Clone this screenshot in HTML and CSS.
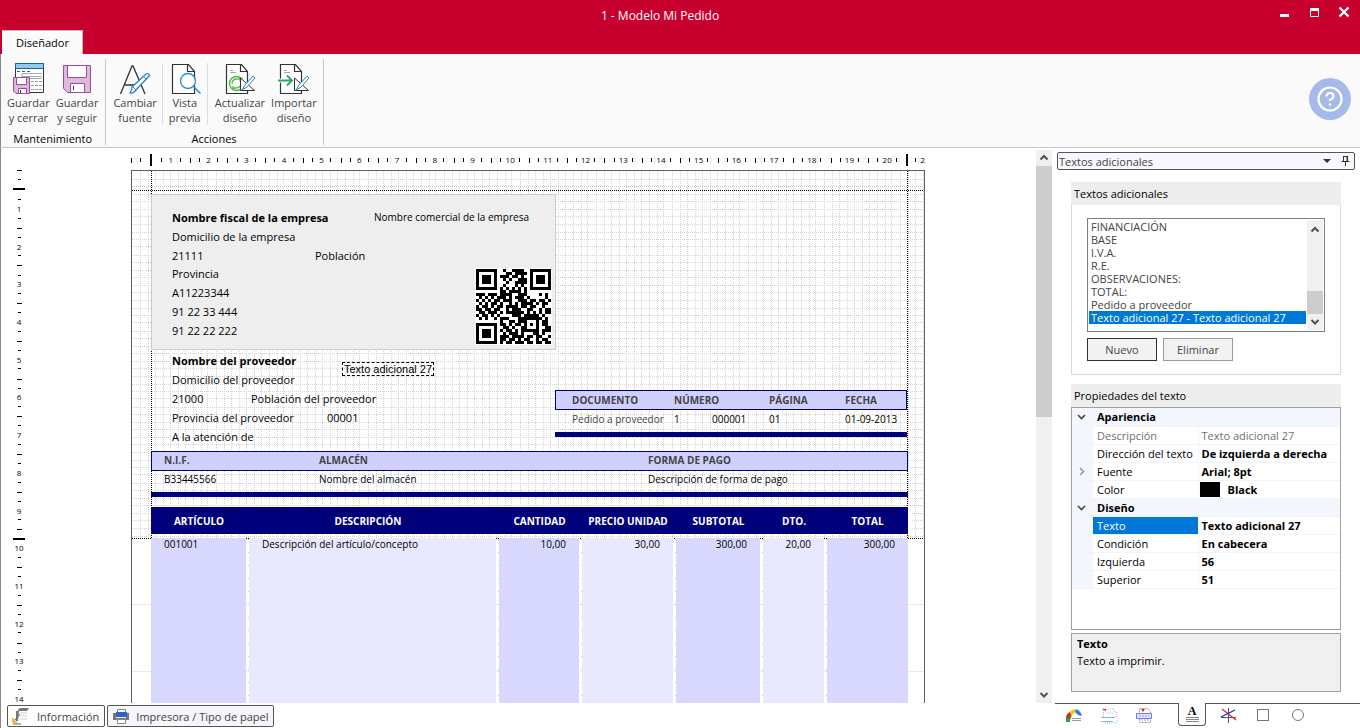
FILE: index.html
```html
<!DOCTYPE html>
<html lang="es">
<head>
<meta charset="utf-8">
<title>1 - Modelo Mi Pedido</title>
<link rel="stylesheet" href="styles.css">
</head>
<body>
<header class="titlebar">
  <div class="caption">
    <span></span>
    <h1>1 - Modelo Mi Pedido</h1>
    <div class="win-buttons">
      <button aria-label="Minimizar"><svg width="12" height="12"><path d="M2 9.500h9" stroke="#fff" stroke-width="3"/></svg></button>
      <button aria-label="Maximizar"><svg width="12" height="12"><path d="M2.500 2v8.500h8V2" stroke="#fff" fill="none"/><path d="M2 3.500h9" stroke="#fff" stroke-width="3"/></svg></button>
      <button aria-label="Cerrar"><svg width="12" height="12"><path d="M1.500 1.500l9 9M10.500 1.500l-9 9" stroke="#fff" stroke-width="2.400"/></svg></button>
    </div>
  </div>
  <button class="ribbon-tab">Diseñador</button>
</header>
<nav class="ribbon">
  <section class="group">
    <div class="tools">
      <button class="tool"><svg width="32" height="32"><path d="M3.500 5v24.500h28V5" fill="#fff" stroke="#333"/><rect x="3.500" y=".5" width="28" height="5" fill="#91c9f2" stroke="#1565a8"/><path d="M5 8.500h3m2 0h3m2 0h3" stroke="#555"/><path d="M10 10.500h20m-20 3h20m-20 2h20M10 10v8" stroke="#aaa"/><path d="M19 18.500h3m1 0h3m1 0h3m-11 4h3m1 0h3m1 0h3m-11 4h3m1 0h3m1 0h3" stroke="#999"/><path d="M1.500 14.500h16v16H4l-2.500-2.500z" fill="#dfb9dc" stroke="#9c4a9a"/><path d="M4.500 14.500h10v7h-10zM6.500 30.500v-5h8v5z" fill="#fff" stroke="#9c4a9a"/><path d="M8.500 27v3" stroke="#333"/></svg><span>Guardar<br>y cerrar</span></button>
      <button class="tool"><svg width="32" height="32"><path d="M2.500 2.500h27v27H6.500l-4-4z" fill="#dfb9dc" stroke="#9c4a9a"/><path d="M6.500 2.500h19v12h-19zM9.500 29.500v-9h14v9z" fill="#fff" stroke="#9c4a9a"/><path d="M12.500 23v4" stroke="#333"/></svg><span>Guardar<br>y seguir</span></button>
    </div>
    <h2>Mantenimiento</h2>
  </section>
  <section class="group actions">
    <div class="tools">
      <button class="tool split"><svg width="32" height="32"><path d="M1.500 31L13 3h1l12 28M6 22h15" fill="none" stroke="#333" stroke-width="1.300"/><path d="M13 24L27 11q3-1 3.500 1.500L17 27q-3 4-6 3 2-3 2-6z" fill="#fff" stroke="#2582c5" stroke-width="1.300"/><path d="M13 23l4 4M24 13l4 4" stroke="#2582c5"/></svg><span>Cambiar<br>fuente</span></button>
      <button class="tool split"><svg width="32" height="32"><path d="M3.500 1.500h16l6 7v22h-22zM18.500 1.500v7h7" fill="#fff" stroke="#333" stroke-width="1.200"/><circle cx="19" cy="18" r="7.500" fill="#fff" stroke="#2b8ad0" stroke-width="1.300"/><path d="M24.500 23.500l7 7" stroke="#2b8ad0" stroke-width="1.500"/></svg><span>Vista<br>previa</span></button>
      <button class="tool"><svg width="32" height="32"><path d="M2.500 1.500h15l6 7v22h-21zM16.500 1.500v7h7" fill="#fff" stroke="#333" stroke-width="1.200"/><path d="M6 7.500h3m-3 2h6" stroke="#aaa"/><circle cx="12.500" cy="20.500" r="7" fill="none" stroke="#54b948" stroke-width="1.500"/><path d="M8 21q0-5 5-5h3m0-2v4m1 2q0 5-5 5H9m0-2v4" fill="none" stroke="#54b948" stroke-width="1.300"/><path d="M16.500 15v12.500h14z" fill="#fff" stroke="#333"/><path d="M21 22l8-9 2 2-8 9-5 3z" fill="#fff" stroke="#2582c5"/></svg><span>Actualizar<br>diseño</span></button>
      <button class="tool"><svg width="32" height="32"><path d="M2.500 1.500h15l6 7v22h-21zM16.500 1.500v7h7" fill="#fff" stroke="#333" stroke-width="1.200"/><path d="M6 7.500h3m-3 2h6" stroke="#aaa"/><path d="M0 17.500h13M9 13l5 4.500L9 22" fill="none" stroke="#fff" stroke-width="4"/><path d="M0 17.500h13M9 12.500l5 5-5 5" fill="none" stroke="#2ba563" stroke-width="1.800"/><path d="M16.500 15v12.500h14z" fill="#fff" stroke="#333"/><path d="M21 22l8-9 2 2-8 9-5 3z" fill="#fff" stroke="#2582c5"/></svg><span>Importar<br>diseño</span></button>
    </div>
    <h2>Acciones</h2>
  </section>
  <button class="help" aria-label="Ayuda"><svg width="42" height="42"><circle cx="21" cy="21" r="21" fill="#a5baeb"/><circle cx="21" cy="21" r="11.500" fill="none" stroke="#fff" stroke-width="2.200"/><path d="M17.500 18.500q0-3.500 3.500-3.500t3.500 3.300q0 2-3.500 3.700v1" fill="none" stroke="#fff" stroke-width="2.200"/><circle cx="21" cy="26.500" r="1.300" fill="#fff"/></svg></button>
</nav>
<main class="workspace">
  <section class="designer">
    <div class="canvas">
      <div class="vruler">
        <i class="lead"></i>
        <ol id="vruler"></ol>
      </div>
      <div class="sheet-area">
        <div class="hruler"><i class="lead"></i><ol id="hruler"></ol><i class="tail">2</i></div>
        <div class="page">
          <svg class="grid" width="792" height="600"><defs><pattern id="mm" width="76" height="76" patternUnits="userSpaceOnUse"><path d="M8.500 0v76M16.500 0v76M23.500 0v76M31.500 0v76M38.500 0v76M46.500 0v76M53.500 0v76M61.500 0v76M69.500 0v76M75.500 0v76M0 8.500h76M0 15.500h76M0 23.500h76M0 30.500h76M0 38.500h76M0 45.500h76M0 53.500h76M0 61.500h76M0 68.500h76M0 75.500h76" stroke="#d4d4d4" stroke-dasharray="1 1"/></pattern></defs><rect width="792" height="368" fill="url(#mm)"/><path d="M0 433.500h792M0 500.500h792" stroke="#d6d6d6" stroke-dasharray="1 1"/><path d="M116.500 368v200M366.500 368v200M449.500 368v200M543.500 368v200M630.500 368v200M694.500 368v200" stroke="#c8c8c8" stroke-dasharray="1 12"/><path d="M0 19.500h792M0 367.500h792M19.500 0v600M775.500 0v600" stroke="#000" stroke-dasharray="1 1"/></svg>
          <div class="company"></div>
          <p class="t b" style="left:40px;top:40px">Nombre fiscal de la empresa</p>
          <p class="t s" style="left:242px;top:39px">Nombre comercial de la empresa</p>
          <p class="t" style="left:40px;top:59px">Domicilio de la empresa</p>
          <p class="t" style="left:40px;top:78px">21111</p>
          <p class="t" style="left:183px;top:78px">Población</p>
          <p class="t" style="left:40px;top:96px">Provincia</p>
          <p class="t" style="left:40px;top:115px">A11223344</p>
          <p class="t" style="left:40px;top:134px">91 22 33 444</p>
          <p class="t" style="left:40px;top:153px">91 22 22 222</p>
          <svg class="qr" id="qr" width="77" height="77" role="img" aria-label="Código QR"></svg>
          <p class="t b" style="left:40px;top:183px">Nombre del proveedor</p>
          <p class="t" style="left:40px;top:202px">Domicilio del proveedor</p>
          <p class="t" style="left:40px;top:221px">21000</p>
          <p class="t" style="left:119px;top:221px">Población del proveedor</p>
          <p class="t" style="left:40px;top:240px">Provincia del proveedor</p>
          <p class="t" style="left:195px;top:240px">00001</p>
          <p class="t" style="left:40px;top:259px">A la atención de</p>
          <p class="selected">Texto adicional 27</p>
          <div class="band doc"></div>
          <p class="t s h" style="left:440px;top:222px">DOCUMENTO</p>
          <p class="t s h" style="left:542px;top:222px">NÚMERO</p>
          <p class="t s h" style="left:637px;top:222px">PÁGINA</p>
          <p class="t s h" style="left:713px;top:222px">FECHA</p>
          <p class="t s g" style="left:440px;top:241px">Pedido a proveedor</p>
          <p class="t s" style="left:542px;top:241px">1</p>
          <p class="t s" style="left:580px;top:241px">000001</p>
          <p class="t s" style="left:637px;top:241px">01</p>
          <p class="t s" style="left:713px;top:241px">01-09-2013</p>
          <div class="band info"></div>
          <p class="t s h" style="left:32px;top:282px">N.I.F.</p>
          <p class="t s h" style="left:187px;top:282px">ALMACÉN</p>
          <p class="t s h" style="left:516px;top:282px">FORMA DE PAGO</p>
          <p class="t s" style="left:32px;top:301px">B33445566</p>
          <p class="t s" style="left:187px;top:301px">Nombre del almacén</p>
          <p class="t s" style="left:516px;top:301px">Descripción de forma de pago</p>
          <table class="lines">
            <colgroup><col class="c1"><col class="c2"><col class="c3"><col class="c4"><col class="c5"><col class="c6"><col class="c7"></colgroup>
            <thead><tr><th>ARTÍCULO</th><th>DESCRIPCIÓN</th><th>CANTIDAD</th><th>PRECIO UNIDAD</th><th>SUBTOTAL</th><th>DTO.</th><th>TOTAL</th></tr></thead>
            <tbody><tr><td>001001</td><td>Descripción del artículo/concepto</td><td>10,00</td><td>30,00</td><td>300,00</td><td>20,00</td><td>300,00</td></tr></tbody>
          </table>
        </div>
      </div>
      <div class="scroll main-scroll"><svg width="16" height="16"><path d="M4.500 9.500L8 6l3.500 3.500" fill="none" stroke="#505050" stroke-width="2"/></svg><i class="thumb"></i><svg width="16" height="16"><path d="M4.500 6L8 9.500 11.500 6" fill="none" stroke="#505050" stroke-width="2"/></svg></div>
    </div>
    <footer class="docks">
      <button class="dock active"><svg width="18" height="18"><path d="M6 4q0-3 3-3h8l-2 3zM4 4h3l-1 10H4z" fill="#777"/><path d="M8 6h7M8 9h7M8 12h7" stroke="#ccc"/><path d="M0 10l6 6H0z" fill="#f5b840"/><path d="M3 13l5-6M1 17h8" stroke="#567" fill="none"/></svg>Información</button>
      <button class="dock"><svg width="18" height="18"><path d="M1 6h3v5h10V6h3v7H1z" fill="#777"/><path d="M5.500 2.500h8v3h-8zM5.500 12.500h8v4h-8z" fill="#fff" stroke="#888"/><rect x="4" y="5" width="11" height="5" fill="#2e62cf"/></svg>Impresora / Tipo de papel</button>
    </footer>
  </section>
  <aside class="side">
    <div class="picker"><span>Textos adicionales</span><svg width="10" height="10"><path d="M1 3h8L5 7z" fill="#333"/></svg><svg width="11" height="12"><path d="M3.500 1v5.500M3 1.500h5M7.500 1v5.500M1.500 6.500h8M5.500 7v4" stroke="#333" fill="none"/><path d="M7 1v6" stroke="#333"/></svg></div>
    <div class="panels">
      <section class="panel">
        <h3>Textos adicionales</h3>
        <div class="panel-body">
          <div class="listbox">
            <ul>
              <li>FINANCIACIÓN</li><li>BASE</li><li>I.V.A.</li><li>R.E.</li><li>OBSERVACIONES:</li><li>TOTAL:</li><li>Pedido a proveedor</li><li class="on">Texto adicional 27 - Texto adicional 27</li>
            </ul>
            <div class="scroll list"><svg width="16" height="16"><path d="M4.500 11.500L8 8l3.500 3.500" fill="none" stroke="#505050" stroke-width="2"/></svg><i class="thumb"></i><svg width="16" height="16"><path d="M4.500 6L8 9.500 11.500 6" fill="none" stroke="#505050" stroke-width="2"/></svg></div>
          </div>
          <div class="buttons"><button class="btn primary">Nuevo</button><button class="btn">Eliminar</button></div>
        </div>
      </section>
      <section class="props">
        <h3>Propiedades del texto</h3>
        <div class="propgrid">
          <table>
            <colgroup><col class="pc1"><col class="pc2"><col></colgroup>
            <tr class="cat"><td><svg width="9" height="9"><path d="M1 3l3.500 3.500L8 3" fill="none" stroke="#444" stroke-width="1.600"/></svg></td><th colspan="2">Apariencia</th></tr>
            <tr class="off"><td></td><th>Descripción</th><td>Texto adicional 27</td></tr>
            <tr><td></td><th>Dirección del texto</th><td>De izquierda a derecha</td></tr>
            <tr><td><svg width="9" height="9"><path d="M3 1l3.500 3.500L3 8" fill="none" stroke="#999" stroke-width="1.600"/></svg></td><th>Fuente</th><td>Arial; 8pt</td></tr>
            <tr class="color"><td></td><th>Color</th><td><i class="swatch"></i>Black</td></tr>
            <tr class="cat"><td><svg width="9" height="9"><path d="M1 3l3.500 3.500L8 3" fill="none" stroke="#444" stroke-width="1.600"/></svg></td><th colspan="2">Diseño</th></tr>
            <tr class="sel"><td></td><th>Texto</th><td>Texto adicional 27</td></tr>
            <tr><td></td><th>Condición</th><td>En cabecera</td></tr>
            <tr><td></td><th>Izquierda</th><td>56</td></tr>
            <tr><td></td><th>Superior</th><td>51</td></tr>
          </table>
        </div>
        <div class="hint"><b>Texto</b><p>Texto a imprimir.</p></div>
      </section>
    </div>
    <nav class="tabs">
      <button aria-label="Colores"><svg width="18" height="18"><path d="M1 15q-1-5 2-7l4 2q-2 1-2 5z" fill="#1eab4c"/><path d="M1 10q1-4 4-5l2 3-4 4z" fill="#e0261c"/><path d="M5 5q3-4 6-2l-2 4-3 1z" fill="#f6c915"/><path d="M11 2q5 2 6 7l-4-1-3-3z" fill="#2e7fd6"/><path d="M7 11.500h9M7 13.500h9" stroke="#999"/></svg></button>
      <button aria-label="Pie"><svg width="18" height="18"><path d="M3.500 1v9M6 2h8v3h3v11H4" fill="none" stroke="#bbb" stroke-dasharray="1 1"/><path d="M2 2h4v2z" fill="#d24"/><path d="M1 10.500h14M1 14.500h12" stroke="#80b8e0"/><path d="M6 6h8" stroke="#ddd"/></svg></button>
      <button aria-label="Detalle"><svg width="18" height="18"><path d="M4.500 1.500h8l3 3v11h-11z" fill="#fff" stroke="#999" stroke-dasharray="2 1"/><path d="M6 2h4L8 5z" fill="#d22"/><path d="M1.500 6.500h15v5h-15z" fill="#e4e4ff" stroke="#7777ee"/><path d="M4 9h10M6 13h8" stroke="#99e" stroke-dasharray="2 1"/></svg></button>
      <button class="current" aria-label="Textos"><b>A</b><svg width="16" height="6"><path d="M2 .5h13M2 2.500h13M2 4.500h13" stroke="#888"/></svg></button>
      <button aria-label="Líneas"><svg width="18" height="18"><path d="M9.500 1v15M2 10.500h15" stroke="#555"/><path d="M3 2l14 11" stroke="#e22" stroke-width="1.300"/><path d="M2 10l14-7" stroke="#22d" stroke-width="1.300"/></svg></button>
      <button aria-label="Rectángulos"><svg width="18" height="18"><rect x="3.500" y="2.500" width="11" height="11" fill="none" stroke="#777"/></svg></button>
      <button aria-label="Círculos"><svg width="18" height="18"><circle cx="9" cy="8" r="5.500" fill="none" stroke="#777"/></svg></button>
    </nav>
  </aside>
</main>
<script src="app.js"></script>
</body>
</html>
```
FILE: styles.css
```css
* { box-sizing: border-box; }
body { margin: 0; height: 100vh; display: flex; flex-direction: column; overflow: hidden; font: 11px/15px "Open Sans", "Noto Sans", sans-serif; color: #000; background: #fff; }
button { font: inherit; color: inherit; border: 0; background: none; padding: 0; }
h1, h2, h3, p, ul, ol { margin: 0; padding: 0; font-size: 11px; font-weight: 400; list-style: none; }
svg { display: block; }

.titlebar { background: #c8002d; display: flex; flex-direction: column; align-items: flex-start; }
.caption { align-self: stretch; height: 30px; display: grid; grid-template-columns: 1fr auto 1fr; align-items: center; color: #fff; }
.caption h1 { font-size: 12px; margin-right: 40px; padding-top: 1px; }
.win-buttons { display: flex; justify-content: flex-end; gap: 18px; padding: 0 10px 6px 0; }
.ribbon-tab { height: 24px; margin-left: 2px; padding: 0 13px 0 14px; background: #fafafa; border-top: 1px solid #bbb; border-right: 1px solid #bbb; }

.ribbon { height: 94px; background: #fafafa; border-bottom: 1px solid #c6c6c6; border-left: 1px solid #888; display: flex; padding: 5px 0 2px; flex: none; align-items: stretch; }
.group { display: flex; flex-direction: column; justify-content: space-between; border-right: 1px solid #c6c6c6; padding: 4px 3px 0; }
.group:first-child { padding-right: 4px; }
.group h2 { text-align: center; line-height: 13px; }
.tools { display: flex; }
.tool { display: flex; flex-direction: column; align-items: center; padding: 0 3px; color: #444; }
.actions { padding-left: 2px; }
.actions .tool { padding: 0 3px; }
.actions .split { padding: 0 5px; border-right: 1px solid #ddd; }
.actions .split + .split { padding: 0 6px; }
.actions .split + .tool:not(.split) { padding-left: 7px; }
.help { margin: 19px 9px 0 auto; height: 42px; }

.workspace { flex: 1; min-height: 0; display: flex; border-left: 1px solid #888; }
.designer { flex: 1; min-width: 0; display: flex; flex-direction: column; }
.canvas { flex: 1; min-height: 0; display: flex; overflow: hidden; }
.sheet-area { flex: 1; min-width: 0; overflow: hidden; }

.vruler { flex: none; width: 130px; padding-top: 22px; }
.vruler ol { height: 528px; margin-left: 12px; width: 12px; display: grid; grid-template-rows: repeat(14, 1fr); }
.vruler .lead { display: block; height: 20px; margin-left: 12px; width: 12px; background: linear-gradient(#000 0 0) 4px 0 / 5px 1px no-repeat, linear-gradient(#000 0 0) 5px 9px / 3px 1px no-repeat, linear-gradient(#000 0 0) 0 100% / 12px 2px no-repeat; }
.ruler-cell { display: flex; align-items: center; justify-content: center; font-size: 8px; line-height: 10px; }
.vruler .ruler-cell { background: linear-gradient(#000 0 0) 50% 25% / 3px 1px no-repeat, linear-gradient(#000 0 0) 50% 75% / 3px 1px no-repeat, linear-gradient(#000 0 0) 50% 0 / 5px 1px no-repeat; }
.vruler .ruler-cell:first-child { background: linear-gradient(#000 0 0) 50% 25% / 3px 1px no-repeat, linear-gradient(#000 0 0) 50% 75% / 3px 1px no-repeat; }
.vruler .heavy { background: linear-gradient(#000 0 0) 50% 25% / 12px 2px no-repeat, linear-gradient(#000 0 0) 50% 75% / 3px 1px no-repeat, linear-gradient(#000 0 0) 50% 0 / 5px 1px no-repeat; }
.hruler { display: flex; width: 795px; height: 12px; margin-top: 6px; margin-bottom: 4px; }
.hruler ol { width: 754px; display: grid; grid-template-columns: repeat(20, 1fr); }
.hruler .ruler-cell { background: linear-gradient(#000 0 0) 25% 50% / 1px 4px no-repeat, linear-gradient(#000 0 0) 75% 50% / 1px 4px no-repeat, linear-gradient(#000 0 0) 0 50% / 1px 5px no-repeat; }
.hruler .ruler-cell:first-child { background: linear-gradient(#000 0 0) 25% 50% / 1px 4px no-repeat, linear-gradient(#000 0 0) 75% 50% / 1px 4px no-repeat; }
.hruler .lead { width: 21px; background: linear-gradient(#000 0 0) 0 50% / 1px 5px no-repeat, linear-gradient(#000 0 0) 9px 50% / 1px 4px no-repeat, linear-gradient(#000 0 0) 100% 0 / 2px 12px no-repeat; }
.hruler .tail { width: 19px; font: 8px/12px "Open Sans", sans-serif; text-align: right; background: linear-gradient(#000 0 0) 0 0 / 2px 12px no-repeat, linear-gradient(#000 0 0) 9px 50% / 1px 4px no-repeat; }

.page { position: relative; width: 794px; height: 600px; border: 1px solid #606060; background: #fff; }
.grid { position: absolute; left: 0; top: 0; }
.company { position: absolute; left: 19px; top: 23px; width: 405px; height: 156px; background: #eee; border: 1px solid #ccc; }
.t { position: absolute; line-height: 14px; white-space: nowrap; }
.s { font-size: 10px; }
.b, .h { font-weight: 700; }
.h { color: #444; }
.g { color: #444; }
.selected { position: absolute; left: 210px; top: 191px; line-height: 12px; border: 1px dashed #000; padding: 0 1px; white-space: nowrap; font-family: "Liberation Sans", Arial, sans-serif; }
.qr { position: absolute; left: 343px; top: 97px; }
.band { position: absolute; height: 47px; border-bottom: 5px solid #00007b; background: linear-gradient(#d0d0ff 0 0) 1px 1px / calc(100% - 2px) 18px no-repeat, linear-gradient(#00007b 0 0) 0 0 / 100% 20px no-repeat; }
.doc { left: 423px; top: 219px; width: 352px; }
.info { left: 19px; top: 280px; width: 757px; height: 46px; }
.lines { position: absolute; left: 19px; top: 336px; width: 760px; table-layout: fixed; border-collapse: separate; border-spacing: 0; font-size: 10px; line-height: 13px; }
.lines thead tr { background: #00007b; }
.lines th { height: 27px; padding: 1px 2px 0 0; color: #fff; white-space: nowrap; }
.lines th:nth-child(2) { padding-right: 12px; }
.lines th:last-child { border-right: 3px solid #fff; padding-right: 0; }
.lines td { height: 240px; vertical-align: top; text-align: right; padding: 0 13px; border-top: 4px solid transparent; border-right: 3px solid transparent; background: #d8d8ff padding-box; }
.lines td:nth-child(even) { background-color: #e8e8ff; }
.lines td:nth-child(-n+2) { text-align: left; }
.c1 { width: 98px; } .c2 { width: 250px; } .c3 { width: 83px; } .c4 { width: 94px; } .c5 { width: 87px; } .c6 { width: 64px; } .c7 { width: 84px; }

.scroll { flex: none; width: 16px; background: #f0f0f0; display: flex; flex-direction: column; }
.main-scroll { margin: 2px 1px 0 0; }
.scroll .thumb { height: 251px; margin-bottom: auto; background: #cdcdcd; }
.docks { flex: none; height: 25px; display: flex; gap: 2px; padding: 2px 6px 1px; }
.dock { display: flex; align-items: center; gap: 7px; padding: 0 5px 0 4px; border: 1px solid #555; border-radius: 2px; color: #444; background: #f5f5fb; }
.dock + .dock { gap: 6px; padding: 0 4px; }
.dock.active { background: #fff; }

.side { flex: none; width: 307px; display: flex; flex-direction: column; }
.picker { flex: none; height: 18px; margin: 4px 5px 0 4px; padding: 0 3px 0 1px; display: flex; align-items: center; gap: 8px; border: 1px solid #555; border-radius: 2px; background: #f7f7fd; color: #444; }
.picker span { flex: 1; }
.panels { flex: 1; min-height: 0; padding: 12px 19px 11px 18px; display: flex; flex-direction: column; gap: 9px; }
h3 { height: 23px; line-height: 23px; padding-left: 3px; background: #ededed; }
.panel-body { border: 1px solid #d9d9d9; border-top: 0; padding: 13px 15px; }
.listbox { height: 114px; border: 1px solid #7a808a; display: flex; justify-content: space-between; padding: 1px; color: #444; }
.listbox ul { flex: 1; padding-right: 1px; }
.listbox li { height: 13px; line-height: 13px; padding-left: 2px; white-space: nowrap; }
.listbox .on { background: #0078d7; color: #fff; }
.scroll.list .thumb { height: 23px; margin: auto 0 0; }
.buttons { display: flex; gap: 6px; margin-top: 6px; }
.btn { width: 70px; height: 23px; border: 1px solid #999; background: #f2f2f2; color: #444; }
.btn.primary { border-color: #333; }
.props { flex: 1; min-height: 0; display: flex; flex-direction: column; }
.props h3 { flex: none; }
.propgrid { flex: 1; border: 1px solid #a0a0a0; }
.propgrid table { width: 100%; table-layout: fixed; border-collapse: collapse; }
.propgrid tr { height: 18px; }
.propgrid td, .propgrid th { padding: 0 4px; line-height: 17px; text-align: left; font-weight: 400; border-bottom: 1px solid #f0f5fb; white-space: nowrap; }
.propgrid td:last-child { font-weight: 700; padding-left: 3px; border-left: 1px solid #f0f5fb; }
.propgrid td:first-child { background: #f3f6fc; padding: 0 5px; border-left: 0; }
.propgrid .cat > * { background: #f3f6fc; font-weight: 700; }
.propgrid .off th, .propgrid .off td:last-child { color: #707070; font-weight: 400; }
.propgrid .sel th { background: #0078d7; color: #fff; }
.propgrid .color td:last-child { padding-left: 1px; }
.swatch { display: inline-block; vertical-align: top; width: 20px; height: 15px; margin: 1px 8px 0 0; background: #000; }
.pc1 { width: 21px; } .pc2 { width: 105px; }
.hint { height: 59px; margin-top: 3px; padding: 1px 5px; border: 1px solid #a0a0a0; background: #f0f0f0; line-height: 17px; }
.tabs { flex: none; height: 25px; margin-left: 2px; border-top: 1px solid #555; display: flex; padding: 0 0 0 10px; gap: 17px; align-items: flex-start; }
.tabs button { width: 18px; padding-top: 3px; }
.tabs .current { width: 28px; height: 23px; margin: -1px -4px 0 8px; background: #fff; border: 1px solid #555; border-top: 0; border-radius: 0 0 4px 4px; display: flex; flex-direction: column; align-items: center; }
.current b { font: bold 12px/11px "Liberation Serif", serif; }
```
FILE: app.js
```js
function fillRuler(id, count, heavy) {
  const list = document.getElementById(id);
  for (let n = 1; n <= count; n++) {
    const cell = document.createElement("li");
    cell.className = "ruler-cell" + (heavy.includes(n) ? " heavy" : "");
    cell.textContent = n;
    list.append(cell);
  }
}
fillRuler("hruler", 20, []);
fillRuler("vruler", 14, [10]);

const modules = [
  "1111111001001111001111111",
  "1000001000110111101000001",
  "1011101011101101001011101",
  "1011101001010011101011101",
  "1011101000100111101011101",
  "1000001001000101001000001",
  "1111111010101010101111111",
  "0000000011011110100000000",
  "1110111011110011100001010",
  "0101010111010111010000010",
  "1010101101110011101101101",
  "0101011010010101111010110",
  "1011010110111101101100100",
  "1101101100101110011001011",
  "0110111010111111010101011",
  "1011010100001110111110100",
  "0101001011100011111111010",
  "0000000010011011100010110",
  "1111111011010110101010110",
  "1000001001101001100010011",
  "1011101010110101111110111",
  "1011101001011101000110100",
  "1011101011101111011011001",
  "1000001011011010110010110",
  "1111111010110111011011011"
];
const cells = modules.flatMap((row, y) => [...row].map((v, x) => v === "1" ? `M${x * 3 + 1} ${y * 3 + 1}h3v3h-3z` : ""));
document.getElementById("qr").innerHTML = `<rect width="77" height="77" fill="#fff"/><path d="${cells.join("")}"/>`;
```
